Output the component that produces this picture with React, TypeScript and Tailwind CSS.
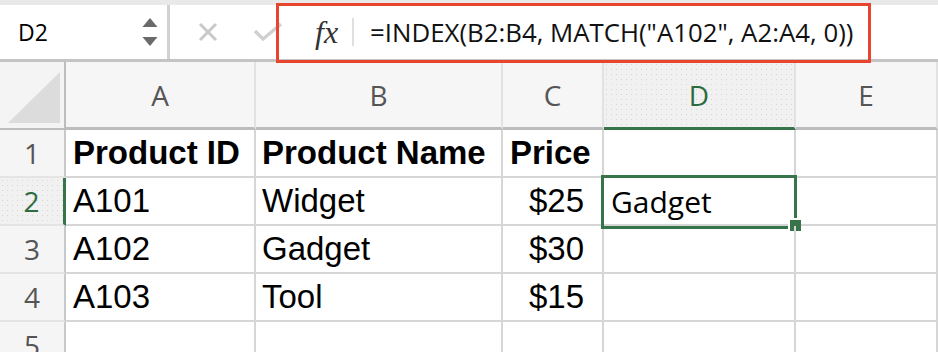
const cols = ["A", "B", "C", "D", "E"];

const rows = [
  { n: 1, a: "Product ID", b: "Product Name", c: "Price", bold: true },
  { n: 2, a: "A101", b: "Widget", c: "$25" },
  { n: 3, a: "A102", b: "Gadget", c: "$30" },
  { n: 4, a: "A103", b: "Tool", c: "$15" },
  { n: 5, a: "", b: "", c: "" },
];

const dotted =
  "bg-[#f1f1f1] bg-[radial-gradient(circle,#d6d6d6_0.8px,transparent_1px)] bg-[length:5px_5px]";

function FormulaBar() {
  return (
    <div className="relative h-[62px] bg-[#e9e9e9] pt-[5px] border-b-[3px] border-[#c4c4c4]">
      <div className="flex h-full bg-white">
        <div className="w-[167px] flex items-center pl-[18px] pr-[9px] justify-between">
          <span className="text-[23px] text-black">D2</span>
          <svg width="16" height="30" viewBox="0 0 16 30">
            <polygon points="8,1 15.5,10 0.5,10" fill="#6a6a6a" />
            <polygon points="0.5,20 15.5,20 8,29" fill="#6a6a6a" />
          </svg>
        </div>
        <div className="w-[3px] bg-[#d2d2d2]" />
        <div className="flex-1 flex items-center">
          <svg className="ml-[28px]" width="20" height="20" viewBox="0 0 20 20">
            <path d="M2 2 L18 18 M18 2 L2 18" stroke="#c9c9c9" strokeWidth="3" />
          </svg>
          <svg className="ml-[35px]" width="30" height="20" viewBox="0 0 30 20">
            <path d="M2 9 L10 17 L28 2" stroke="#d0d0d0" strokeWidth="3.5" fill="none" />
          </svg>
          <span className="ml-[32px] font-['Liberation_Serif'] italic text-[32px] text-[#333] leading-none">
            fx
          </span>
          <div className="ml-[14px] w-[2px] h-[28px] bg-[#e0e0e0]" />
          <span className="ml-[16px] text-[25.8px] text-[#111]">
            =INDEX(B2:B4, MATCH("A102", A2:A4, 0))
          </span>
        </div>
      </div>
      <div className="absolute left-[276px] top-[3px] w-[595px] h-[60px] border-[3px] border-[#e8452f]" />
    </div>
  );
}

function Grid() {
  return (
    <div className="grid grid-cols-[66px_190px_247px_101px_192px_1fr] grid-rows-[68px_48px_48px_48px_48px_48px]">
      <div className="bg-[#f4f4f4] border-r-2 border-b-2 border-r-[#bdbdbd] border-b-[#bdbdbd] flex items-end justify-end">
        <svg width="64" height="66" viewBox="0 0 64 66">
          <polygon points="8,61 60,10 60,61" fill="#dcdcdc" />
        </svg>
      </div>
      {cols.map((c) => (
        <div
          key={c}
          className={`flex items-center justify-center border-r-2 border-r-[#e2e2e2] border-b-[3px] text-[28px] ${
            c === "D"
              ? `${dotted} border-b-[#38744a] text-[#2f6b40]`
              : "bg-[#f6f6f6] border-b-[#bdbdbd] text-[#555]"
          }`}
        >
          {c}
        </div>
      ))}
      {rows.map((r) => (
        <Row key={r.n} {...r} />
      ))}
    </div>
  );
}

function Row({ n, a, b, c, bold }: { n: number; a: string; b: string; c: string; bold?: boolean }) {
  const sel = n === 2;
  const text = `font-['Liberation_Sans'] text-[33px] text-black ${bold ? "font-bold" : ""}`;
  const cell = "border-r-2 border-b-2 border-[#d6d6d6] flex items-center";
  return (
    <>
      <div
        className={`flex items-center justify-center border-b-2 border-b-[#e4e4e4] text-[28px] ${
          sel
            ? `${dotted} border-r-[3px] border-r-[#38744a] text-[#2f6b40]`
            : "bg-[#f5f5f5] border-r-2 border-r-[#c8c8c8] text-[#555]"
        }`}
      >
        {n}
      </div>
      <div className={`${cell} pl-[7px] ${text}`}>{a}</div>
      <div className={`${cell} pl-[6px] ${text}`}>{b}</div>
      <div className={`${cell} ${text} ${bold ? "pl-[7px]" : "justify-end pr-[18px]"}`}>{c}</div>
      <div className={`${cell} relative pl-[7px] text-[30px] text-black`}>
        {sel && (
          <>
            Gadget
            <div className="absolute -left-[3px] -top-[3px] w-[196px] h-[54px] border-[3px] border-[#38744a]" />
            <div className="absolute left-[184px] top-[40px] w-[13px] h-[13px] bg-[#38744a] border-l-2 border-t-2 border-white" />
          </>
        )}
      </div>
      <div className={`${cell} border-r-0`} />
    </>
  );
}

export default function App() {
  return (
    <div className="w-[938px] h-[352px] overflow-hidden bg-white font-['Open_Sans',sans-serif]">
      <FormulaBar />
      <Grid />
    </div>
  );
}
